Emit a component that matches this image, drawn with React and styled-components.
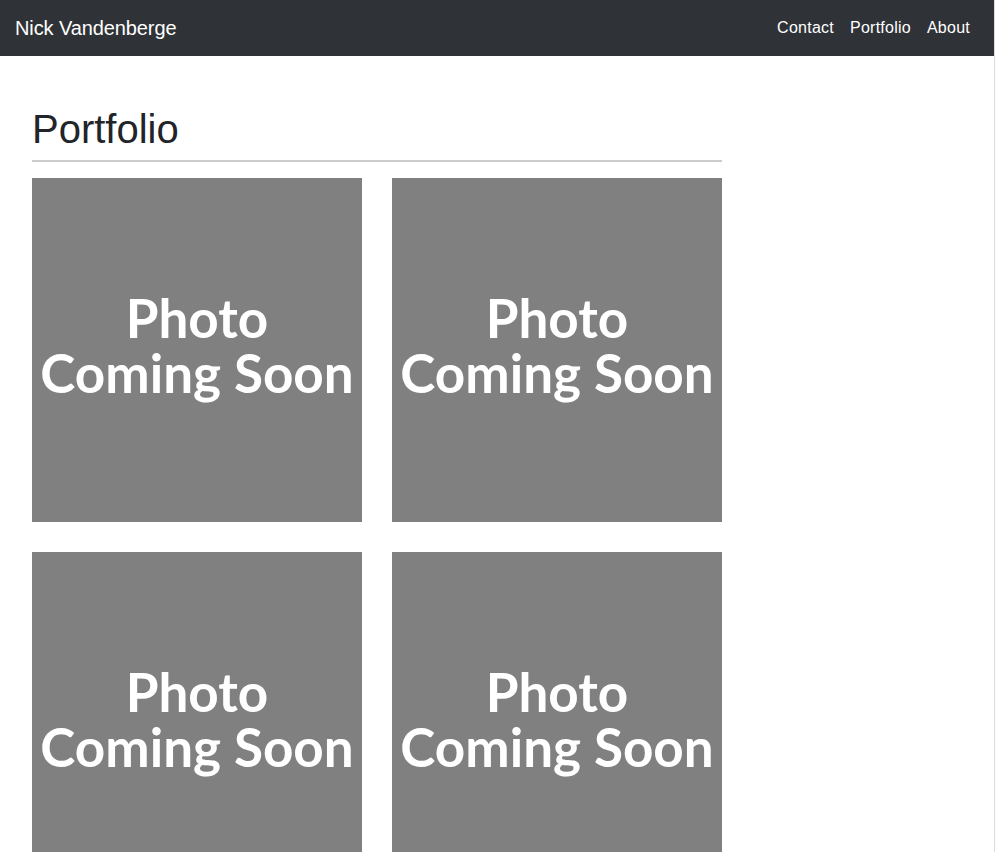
import React from "react";
import styled, { createGlobalStyle } from "styled-components";

const Global = createGlobalStyle`
  html, body { margin: 0; padding: 0; background: #fff; }
  body { font-family: "Liberation Sans", Arial, sans-serif; color: #212529; }
  * { box-sizing: border-box; }
`;

const Page = styled.div`
  min-height: 100vh;
  border-right: 1px solid #dcdcdc;
`;

const NavBar = styled.nav`
  height: 56px;
  background: #2f3338;
  display: flex;
  align-items: center;
  justify-content: space-between;
  padding: 0 16px 0 15px;
`;

const Brand = styled.a`
  color: #fff;
  font-size: 20px;
  text-decoration: none;
  letter-spacing: -0.1px;
`;

const NavList = styled.div`
  display: flex;
  align-items: center;
`;

const NavLink = styled.a`
  color: #fff;
  font-size: 16px;
  padding: 8px;
  text-decoration: none;
  letter-spacing: 0.25px;
`;

const Main = styled.main`
  padding: 49px 32px 0;
  width: 754px;
`;

const Title = styled.h1`
  font-size: 40px;
  font-weight: 500;
  line-height: 1.2;
  margin: 0 0 7px;
`;

const Rule = styled.hr`
  border: 0;
  height: 2px;
  background: #cccccc;
  margin: 0 0 16px;
`;

const Grid = styled.div`
  display: grid;
  grid-template-columns: repeat(2, 330px);
  gap: 30px;
`;

const Photo = styled.div`
  width: 330px;
  height: 344px;
  background: #808080;
  display: flex;
  flex-direction: column;
  align-items: center;
  justify-content: center;
  color: #fff;
  font-family: Lato, "Open Sans", sans-serif;
  font-weight: 700;
  font-size: 53px;
  line-height: 55px;
  text-align: center;
  padding-bottom: 10px;
`;

const items = [1, 2, 3, 4];

export default function App() {
  return (
    <Page>
      <Global />
      <NavBar>
        <Brand href="#">Nick Vandenberge</Brand>
        <NavList>
          <NavLink href="#">Contact</NavLink>
          <NavLink href="#">Portfolio</NavLink>
          <NavLink href="#">About</NavLink>
        </NavList>
      </NavBar>
      <Main>
        <Title>Portfolio</Title>
        <Rule />
        <Grid>
          {items.map((i) => (
            <Photo key={i}>
              <span>Photo</span>
              <span>Coming Soon</span>
            </Photo>
          ))}
        </Grid>
      </Main>
    </Page>
  );
}
